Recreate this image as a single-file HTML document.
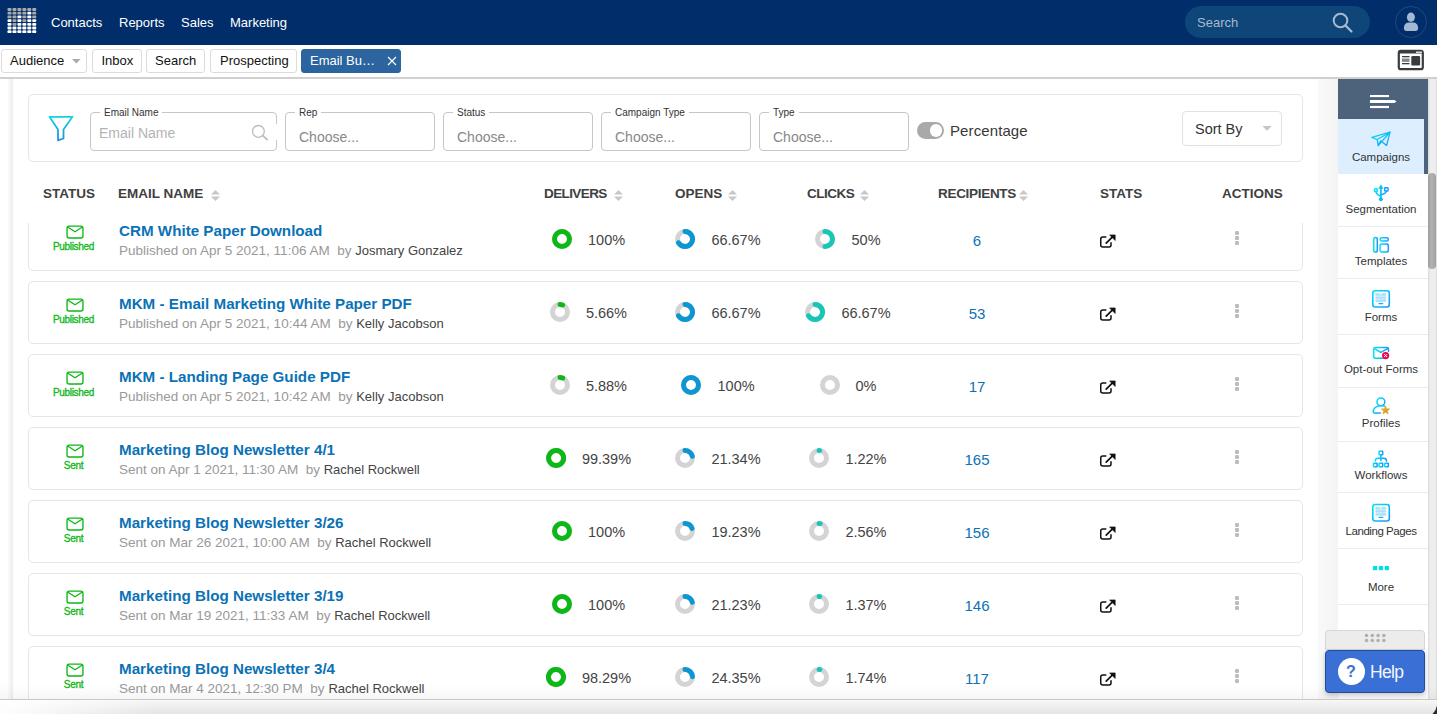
<!DOCTYPE html>
<html><head><meta charset="utf-8">
<style>
*{box-sizing:border-box;margin:0;padding:0}
html,body{width:1437px;height:714px;overflow:hidden;background:#fff;font-family:"Liberation Sans",sans-serif;position:relative}
.abs{position:absolute}
#hdr{left:0;top:0;width:1437px;height:45px;background:#012d6a}
.nav{top:15px;color:#fff;font-size:13px;line-height:15px}
#srch{left:1185px;top:6px;width:185px;height:32px;border-radius:16px;background:#0f4679}
.tab{top:49px;height:24px;border:1px solid #dcdcdc;border-radius:3px;font-size:13px;line-height:22px;color:#111;background:#fff}
#rule{left:0;top:77px;width:1437px;height:2px;background:#d0d0d0}
.lstrip{left:7px;top:79px;width:6px;height:620px;background:linear-gradient(to right,#fff,#ececec)}
.rshadow{left:1318px;top:79px;width:20px;height:620px;background:linear-gradient(to right,#f9f9f9,#f4f4f4)}
#filter{left:28px;top:94px;width:1275px;height:68px;border:1px solid #e6e6e6;border-radius:5px;background:#fff}
.fld{top:112px;height:39px;border:1px solid #c6c6c6;border-radius:4px;background:#fff}
.flab{top:107px;font-size:10px;line-height:12px;color:#333;background:#fff;padding:0 4px}
.ph{font-size:14px;line-height:16px;color:#888}
.th{top:186px;font-size:13.5px;line-height:16px;font-weight:bold;color:#404040}
.sort{width:9px;height:11px}
.card{left:28px;width:1275px;height:63px;border:1px solid #e6e6e6;border-radius:5px;background:#fff}
.stxt{left:40px;width:67px;text-align:center;font-size:10px;line-height:12px;color:#0bb815;letter-spacing:-0.3px;-webkit-text-stroke:0.3px #0bb815}
.ttl{left:119px;font-size:15.2px;line-height:18px;font-weight:bold;color:#0b72b5;white-space:nowrap}
.sub{left:119px;font-size:13.5px;line-height:16px;color:#999;white-space:nowrap}
.by{color:#444;font-size:13px}
.pct{font-size:14.5px;line-height:18px;color:#444;white-space:nowrap}
.rec{left:937px;width:80px;text-align:center;font-size:15px;line-height:18px;color:#0b72b5}
.dots{left:1235px;width:5px;height:16px}
.dots i{display:block;width:4.4px;height:4.2px;border-radius:1.2px;background:#bcbcbc;margin:0 0 0.8px 0}
#hdrcover{left:28px;top:162px;width:1276px;height:61px;background:#fff}
#side{left:1338px;top:79px;width:90px;height:620px;background:#fff}
#sidehdr{left:1338px;top:79px;width:90px;height:40px;background:#4d637b}
#camp{left:1338px;top:119px;width:86px;height:55px;background:#ddefff}
#campstrip{left:1424px;top:119px;width:4px;height:55px;background:#4d637b}
.sep{left:1338px;width:90px;height:1px;background:#ececec}
.sitem{left:1338px;width:86px;text-align:center;font-size:11.5px;line-height:14px;color:#333}
#track{left:1428px;top:79px;width:9px;height:620px;background:linear-gradient(to right,#d9d9d9,#ededed 22%,#efefef 75%,#dddddd)}
#thumb{left:1428px;top:173px;width:8px;height:96px;border-radius:4px;background:linear-gradient(to right,#9c9c9c,#b2b2b2 40%,#a8a8a8 80%,#9a9a9a)}
#bottom{left:0;top:699px;width:1437px;height:15px;background:linear-gradient(#f7f7f7,#e4e4e4);border-top:1px solid #c8c8c8}
#helphandle{left:1325px;top:630px;width:100px;height:20px;border:1px solid #d6d6d6;border-radius:4px 4px 0 0;background:#ececec}
#help{left:1325px;top:650px;width:100px;height:43px;border:1px solid #1f4c9c;border-radius:4px;background:#3a70d6;box-shadow:0 2px 5px rgba(0,0,0,0.22)}
</style></head><body>
<div id="hdr" class="abs"></div>
<svg class="abs" style="left:0;top:0" width="45" height="45" viewBox="0 0 45 45"><rect x="7.50" y="8.10" width="4" height="2.8" rx="0.9" fill="#a9a9a9"/><rect x="12.45" y="8.10" width="4" height="2.8" rx="0.9" fill="#a9a9a9"/><rect x="17.40" y="8.10" width="4" height="2.8" rx="0.9" fill="#a9a9a9"/><rect x="22.35" y="8.10" width="4" height="2.8" rx="0.9" fill="#a9a9a9"/><rect x="27.30" y="8.10" width="4" height="2.8" rx="0.9" fill="#a9a9a9"/><rect x="32.25" y="8.10" width="4" height="2.8" rx="0.9" fill="#a9a9a9"/><rect x="7.50" y="11.80" width="4" height="2.8" rx="0.9" fill="#a9a9a9"/><rect x="12.45" y="11.80" width="4" height="2.8" rx="0.9" fill="#a9a9a9"/><rect x="17.40" y="11.80" width="4" height="2.8" rx="0.9" fill="#a9a9a9"/><rect x="22.35" y="11.80" width="4" height="2.8" rx="0.9" fill="#a9a9a9"/><rect x="27.30" y="11.80" width="4" height="2.8" rx="0.9" fill="#ffffff"/><rect x="32.25" y="11.80" width="4" height="2.8" rx="0.9" fill="#a9a9a9"/><rect x="7.50" y="15.50" width="4" height="2.8" rx="0.9" fill="#a9a9a9"/><rect x="12.45" y="15.50" width="4" height="2.8" rx="0.9" fill="#a9a9a9"/><rect x="17.40" y="15.50" width="4" height="2.8" rx="0.9" fill="#ffffff"/><rect x="22.35" y="15.50" width="4" height="2.8" rx="0.9" fill="#a9a9a9"/><rect x="27.30" y="15.50" width="4" height="2.8" rx="0.9" fill="#ffffff"/><rect x="32.25" y="15.50" width="4" height="2.8" rx="0.9" fill="#a9a9a9"/><rect x="7.50" y="19.20" width="4" height="2.8" rx="0.9" fill="#ffffff"/><rect x="12.45" y="19.20" width="4" height="2.8" rx="0.9" fill="#a9a9a9"/><rect x="17.40" y="19.20" width="4" height="2.8" rx="0.9" fill="#ffffff"/><rect x="22.35" y="19.20" width="4" height="2.8" rx="0.9" fill="#a9a9a9"/><rect x="27.30" y="19.20" width="4" height="2.8" rx="0.9" fill="#ffffff"/><rect x="32.25" y="19.20" width="4" height="2.8" rx="0.9" fill="#ffffff"/><rect x="7.50" y="22.90" width="4" height="2.8" rx="0.9" fill="#ffffff"/><rect x="12.45" y="22.90" width="4" height="2.8" rx="0.9" fill="#a9a9a9"/><rect x="17.40" y="22.90" width="4" height="2.8" rx="0.9" fill="#ffffff"/><rect x="22.35" y="22.90" width="4" height="2.8" rx="0.9" fill="#ffffff"/><rect x="27.30" y="22.90" width="4" height="2.8" rx="0.9" fill="#ffffff"/><rect x="32.25" y="22.90" width="4" height="2.8" rx="0.9" fill="#ffffff"/><rect x="7.50" y="26.60" width="4" height="2.8" rx="0.9" fill="#ffffff"/><rect x="12.45" y="26.60" width="4" height="2.8" rx="0.9" fill="#ffffff"/><rect x="17.40" y="26.60" width="4" height="2.8" rx="0.9" fill="#ffffff"/><rect x="22.35" y="26.60" width="4" height="2.8" rx="0.9" fill="#ffffff"/><rect x="27.30" y="26.60" width="4" height="2.8" rx="0.9" fill="#ffffff"/><rect x="32.25" y="26.60" width="4" height="2.8" rx="0.9" fill="#ffffff"/><rect x="7.50" y="30.30" width="4" height="2.8" rx="0.9" fill="#ffffff"/><rect x="12.45" y="30.30" width="4" height="2.8" rx="0.9" fill="#ffffff"/><rect x="17.40" y="30.30" width="4" height="2.8" rx="0.9" fill="#ffffff"/><rect x="22.35" y="30.30" width="4" height="2.8" rx="0.9" fill="#ffffff"/><rect x="27.30" y="30.30" width="4" height="2.8" rx="0.9" fill="#ffffff"/><rect x="32.25" y="30.30" width="4" height="2.8" rx="0.9" fill="#ffffff"/></svg>
<div class="abs nav" style="left:51px">Contacts</div>
<div class="abs nav" style="left:119px">Reports</div>
<div class="abs nav" style="left:181px">Sales</div>
<div class="abs nav" style="left:230px">Marketing</div>
<div id="srch" class="abs"></div>
<div class="abs" style="left:1197px;top:15px;font-size:13px;line-height:15px;color:#a9b9cc">Search</div>
<svg class="abs" style="left:1330px;top:11px" width="24" height="24" viewBox="0 0 24 24"><circle cx="10.5" cy="9.5" r="6.8" fill="none" stroke="#a9b9cc" stroke-width="2"/><path d="M15.5 14.5 L21.5 20.5" stroke="#a9b9cc" stroke-width="2.2" stroke-linecap="round"/></svg>
<svg class="abs" style="left:1394px;top:5px" width="34" height="34" viewBox="0 0 34 34"><circle cx="17" cy="17" r="15.5" fill="none" stroke="#24497a" stroke-width="1"/><ellipse cx="16.9" cy="12.2" rx="4" ry="4.6" fill="#a3b8d3"/><path d="M9.9 23.5 Q9.9 17.6 14.5 17.4 L19.5 17.4 Q24.1 17.6 24.1 23.5 Q24.1 25.9 22 25.9 L12 25.9 Q9.9 25.9 9.9 23.5Z" fill="#a3b8d3"/></svg>

<div class="abs tab" style="left:1px;width:86px;padding-left:8px">Audience</div>
<svg class="abs" style="left:72px;top:59px" width="10" height="6"><path d="M0 0 H8.6 L4.3 4.4Z" fill="#aaa"/></svg>
<div class="abs tab" style="left:92px;width:50px;padding-left:8.5px">Inbox</div>
<div class="abs tab" style="left:146px;width:59px;padding-left:8px">Search</div>
<div class="abs tab" style="left:210px;width:87px;padding-left:9px">Prospecting</div>
<div class="abs tab" style="left:301px;width:100px;padding-left:8px;background:#2b649e;border-color:#2b649e;color:#fff">Email Bu…</div>
<svg class="abs" style="left:386px;top:55px" width="12" height="12"><path d="M2 2 L10 10 M10 2 L2 10" stroke="#fff" stroke-width="1.2"/></svg>
<svg class="abs" style="left:1397px;top:49px" width="28" height="22" viewBox="0 0 28 22"><rect x="1.8" y="1.8" width="24" height="18.4" rx="2" fill="#fff" stroke="#3a3d40" stroke-width="2.2"/><rect x="2" y="2" width="24" height="2.5" fill="#3a3d40"/><rect x="19" y="2.6" width="6" height="1.2" fill="#fff"/><rect x="5" y="7" width="7.5" height="1.3" fill="#3a3d40"/><rect x="5" y="9.5" width="7.5" height="3.4" fill="#888"/><rect x="5" y="14" width="7.5" height="1.3" fill="#3a3d40"/><rect x="14.3" y="7" width="8.8" height="9.5" rx="1.2" fill="#3a3d40"/></svg>
<div id="rule" class="abs"></div>

<div class="abs lstrip"></div>
<div class="abs rshadow"></div>

<div class="abs card" style="top:208px"></div>
<svg class="abs" style="left:65.9px;top:225.3px" width="18" height="14" viewBox="0 0 18 14"><rect x="1.05" y="1.05" width="15.9" height="11.9" rx="2" fill="none" stroke="#0bb815" stroke-width="1.35"/><path d="M1.6 2 L9 6.8 L16.4 2" fill="none" stroke="#0bb815" stroke-width="1.35" stroke-linejoin="round"/></svg>
<div class="abs stxt" style="top:241px">Published</div>
<div class="abs ttl" style="top:222px">CRM White Paper Download</div>
<div class="abs sub" style="top:243px">Published on Apr 5 2021, 11:06 AM&nbsp; by <span class="by">Josmary Gonzalez</span></div>
<svg class="abs" style="left:551.9617499999999px;top:229px" width="20" height="20" viewBox="0 0 20 20"><circle cx="10" cy="10" r="7.5" fill="none" stroke="#d4d4d4" stroke-width="5"/><circle cx="10" cy="10" r="7.5" fill="none" stroke="#0bb815" stroke-width="5"/></svg><div class="abs pct" style="left:588.0px;top:231px">100%</div>
<svg class="abs" style="left:675.41525px;top:229px" width="20" height="20" viewBox="0 0 20 20"><circle cx="10" cy="10" r="7.5" fill="none" stroke="#d4d4d4" stroke-width="5"/><path d="M10 2.5 A7.5 7.5 0 1 1 3.50 13.75" fill="none" stroke="#0c97d2" stroke-width="5" stroke-linecap="round"/></svg><div class="abs pct" style="left:711.4px;top:231px">66.67%</div>
<svg class="abs" style="left:815.49275px;top:229px" width="20" height="20" viewBox="0 0 20 20"><circle cx="10" cy="10" r="7.5" fill="none" stroke="#d4d4d4" stroke-width="5"/><path d="M10 2.5 A7.5 7.5 0 0 1 10.00 17.50" fill="none" stroke="#17c6b6" stroke-width="5" stroke-linecap="round"/></svg><div class="abs pct" style="left:851.5px;top:231px">50%</div>
<div class="abs rec" style="top:232px">6</div>
<svg class="abs" style="left:1099px;top:233px" width="18" height="18" viewBox="0 0 18 18"><path d="M6.8 3.9 H3.8 Q1.75 3.9 1.75 5.9 V12.1 Q1.75 14.1 3.8 14.1 H10 Q12 14.1 12 12.1 V9.8" fill="none" stroke="#111" stroke-width="1.5" stroke-linecap="round"/><path d="M7.2 10.2 L13.5 3.9" stroke="#111" stroke-width="1.7" stroke-linecap="round"/><path d="M10.6 1.9 H16.2 V7.5 Z" fill="#111" stroke="#111" stroke-width="0.6" stroke-linejoin="round"/></svg>
<div class="abs dots" style="top:231px"><i></i><i></i><i></i></div>
<div class="abs card" style="top:281px"></div>
<svg class="abs" style="left:65.9px;top:298.3px" width="18" height="14" viewBox="0 0 18 14"><rect x="1.05" y="1.05" width="15.9" height="11.9" rx="2" fill="none" stroke="#0bb815" stroke-width="1.35"/><path d="M1.6 2 L9 6.8 L16.4 2" fill="none" stroke="#0bb815" stroke-width="1.35" stroke-linejoin="round"/></svg>
<div class="abs stxt" style="top:314px">Published</div>
<div class="abs ttl" style="top:295px">MKM - Email Marketing White Paper PDF</div>
<div class="abs sub" style="top:316px">Published on Apr 5 2021, 10:44 AM&nbsp; by <span class="by">Kelly Jacobson</span></div>
<svg class="abs" style="left:549.94625px;top:302px" width="20" height="20" viewBox="0 0 20 20"><circle cx="10" cy="10" r="7.5" fill="none" stroke="#d4d4d4" stroke-width="5"/><path d="M10 2.5 A7.5 7.5 0 0 1 12.61 2.97" fill="none" stroke="#0bb815" stroke-width="5" stroke-linecap="round"/></svg><div class="abs pct" style="left:585.9px;top:304px">5.66%</div>
<svg class="abs" style="left:675.41525px;top:302px" width="20" height="20" viewBox="0 0 20 20"><circle cx="10" cy="10" r="7.5" fill="none" stroke="#d4d4d4" stroke-width="5"/><path d="M10 2.5 A7.5 7.5 0 1 1 3.50 13.75" fill="none" stroke="#0c97d2" stroke-width="5" stroke-linecap="round"/></svg><div class="abs pct" style="left:711.4px;top:304px">66.67%</div>
<svg class="abs" style="left:805.41525px;top:302px" width="20" height="20" viewBox="0 0 20 20"><circle cx="10" cy="10" r="7.5" fill="none" stroke="#d4d4d4" stroke-width="5"/><path d="M10 2.5 A7.5 7.5 0 1 1 3.50 13.75" fill="none" stroke="#17c6b6" stroke-width="5" stroke-linecap="round"/></svg><div class="abs pct" style="left:841.4px;top:304px">66.67%</div>
<div class="abs rec" style="top:305px">53</div>
<svg class="abs" style="left:1099px;top:306px" width="18" height="18" viewBox="0 0 18 18"><path d="M6.8 3.9 H3.8 Q1.75 3.9 1.75 5.9 V12.1 Q1.75 14.1 3.8 14.1 H10 Q12 14.1 12 12.1 V9.8" fill="none" stroke="#111" stroke-width="1.5" stroke-linecap="round"/><path d="M7.2 10.2 L13.5 3.9" stroke="#111" stroke-width="1.7" stroke-linecap="round"/><path d="M10.6 1.9 H16.2 V7.5 Z" fill="#111" stroke="#111" stroke-width="0.6" stroke-linejoin="round"/></svg>
<div class="abs dots" style="top:304px"><i></i><i></i><i></i></div>
<div class="abs card" style="top:354px"></div>
<svg class="abs" style="left:65.9px;top:371.3px" width="18" height="14" viewBox="0 0 18 14"><rect x="1.05" y="1.05" width="15.9" height="11.9" rx="2" fill="none" stroke="#0bb815" stroke-width="1.35"/><path d="M1.6 2 L9 6.8 L16.4 2" fill="none" stroke="#0bb815" stroke-width="1.35" stroke-linejoin="round"/></svg>
<div class="abs stxt" style="top:387px">Published</div>
<div class="abs ttl" style="top:368px">MKM - Landing Page Guide PDF</div>
<div class="abs sub" style="top:389px">Published on Apr 5 2021, 10:42 AM&nbsp; by <span class="by">Kelly Jacobson</span></div>
<svg class="abs" style="left:549.94625px;top:375px" width="20" height="20" viewBox="0 0 20 20"><circle cx="10" cy="10" r="7.5" fill="none" stroke="#d4d4d4" stroke-width="5"/><path d="M10 2.5 A7.5 7.5 0 0 1 12.71 3.01" fill="none" stroke="#0bb815" stroke-width="5" stroke-linecap="round"/></svg><div class="abs pct" style="left:585.9px;top:377px">5.88%</div>
<svg class="abs" style="left:681.4617499999999px;top:375px" width="20" height="20" viewBox="0 0 20 20"><circle cx="10" cy="10" r="7.5" fill="none" stroke="#d4d4d4" stroke-width="5"/><circle cx="10" cy="10" r="7.5" fill="none" stroke="#0c97d2" stroke-width="5"/></svg><div class="abs pct" style="left:717.5px;top:377px">100%</div>
<svg class="abs" style="left:819.52375px;top:375px" width="20" height="20" viewBox="0 0 20 20"><circle cx="10" cy="10" r="7.5" fill="none" stroke="#d4d4d4" stroke-width="5"/></svg><div class="abs pct" style="left:855.5px;top:377px">0%</div>
<div class="abs rec" style="top:378px">17</div>
<svg class="abs" style="left:1099px;top:379px" width="18" height="18" viewBox="0 0 18 18"><path d="M6.8 3.9 H3.8 Q1.75 3.9 1.75 5.9 V12.1 Q1.75 14.1 3.8 14.1 H10 Q12 14.1 12 12.1 V9.8" fill="none" stroke="#111" stroke-width="1.5" stroke-linecap="round"/><path d="M7.2 10.2 L13.5 3.9" stroke="#111" stroke-width="1.7" stroke-linecap="round"/><path d="M10.6 1.9 H16.2 V7.5 Z" fill="#111" stroke="#111" stroke-width="0.6" stroke-linejoin="round"/></svg>
<div class="abs dots" style="top:377px"><i></i><i></i><i></i></div>
<div class="abs card" style="top:427px"></div>
<svg class="abs" style="left:65.9px;top:444.3px" width="18" height="14" viewBox="0 0 18 14"><rect x="1.05" y="1.05" width="15.9" height="11.9" rx="2" fill="none" stroke="#0bb815" stroke-width="1.35"/><path d="M1.6 2 L9 6.8 L16.4 2" fill="none" stroke="#0bb815" stroke-width="1.35" stroke-linejoin="round"/></svg>
<div class="abs stxt" style="top:460px">Sent</div>
<div class="abs ttl" style="top:441px">Marketing Blog Newsletter 4/1</div>
<div class="abs sub" style="top:462px">Sent on Apr 1 2021, 11:30 AM&nbsp; by <span class="by">Rachel Rockwell</span></div>
<svg class="abs" style="left:545.91525px;top:448px" width="20" height="20" viewBox="0 0 20 20"><circle cx="10" cy="10" r="7.5" fill="none" stroke="#d4d4d4" stroke-width="5"/><path d="M10 2.5 A7.5 7.5 0 1 1 9.71 2.51" fill="none" stroke="#0bb815" stroke-width="5" stroke-linecap="round"/></svg><div class="abs pct" style="left:581.9px;top:450px">99.39%</div>
<svg class="abs" style="left:675.41525px;top:448px" width="20" height="20" viewBox="0 0 20 20"><circle cx="10" cy="10" r="7.5" fill="none" stroke="#d4d4d4" stroke-width="5"/><path d="M10 2.5 A7.5 7.5 0 0 1 17.30 8.29" fill="none" stroke="#0c97d2" stroke-width="5" stroke-linecap="round"/></svg><div class="abs pct" style="left:711.4px;top:450px">21.34%</div>
<svg class="abs" style="left:809.44625px;top:448px" width="20" height="20" viewBox="0 0 20 20"><circle cx="10" cy="10" r="7.5" fill="none" stroke="#d4d4d4" stroke-width="5"/><path d="M10 2.5 A7.5 7.5 0 0 1 10.57 2.52" fill="none" stroke="#17c6b6" stroke-width="5" stroke-linecap="round"/></svg><div class="abs pct" style="left:845.4px;top:450px">1.22%</div>
<div class="abs rec" style="top:451px">165</div>
<svg class="abs" style="left:1099px;top:452px" width="18" height="18" viewBox="0 0 18 18"><path d="M6.8 3.9 H3.8 Q1.75 3.9 1.75 5.9 V12.1 Q1.75 14.1 3.8 14.1 H10 Q12 14.1 12 12.1 V9.8" fill="none" stroke="#111" stroke-width="1.5" stroke-linecap="round"/><path d="M7.2 10.2 L13.5 3.9" stroke="#111" stroke-width="1.7" stroke-linecap="round"/><path d="M10.6 1.9 H16.2 V7.5 Z" fill="#111" stroke="#111" stroke-width="0.6" stroke-linejoin="round"/></svg>
<div class="abs dots" style="top:450px"><i></i><i></i><i></i></div>
<div class="abs card" style="top:500px"></div>
<svg class="abs" style="left:65.9px;top:517.3px" width="18" height="14" viewBox="0 0 18 14"><rect x="1.05" y="1.05" width="15.9" height="11.9" rx="2" fill="none" stroke="#0bb815" stroke-width="1.35"/><path d="M1.6 2 L9 6.8 L16.4 2" fill="none" stroke="#0bb815" stroke-width="1.35" stroke-linejoin="round"/></svg>
<div class="abs stxt" style="top:533px">Sent</div>
<div class="abs ttl" style="top:514px">Marketing Blog Newsletter 3/26</div>
<div class="abs sub" style="top:535px">Sent on Mar 26 2021, 10:00 AM&nbsp; by <span class="by">Rachel Rockwell</span></div>
<svg class="abs" style="left:551.9617499999999px;top:521px" width="20" height="20" viewBox="0 0 20 20"><circle cx="10" cy="10" r="7.5" fill="none" stroke="#d4d4d4" stroke-width="5"/><circle cx="10" cy="10" r="7.5" fill="none" stroke="#0bb815" stroke-width="5"/></svg><div class="abs pct" style="left:588.0px;top:523px">100%</div>
<svg class="abs" style="left:675.41525px;top:521px" width="20" height="20" viewBox="0 0 20 20"><circle cx="10" cy="10" r="7.5" fill="none" stroke="#d4d4d4" stroke-width="5"/><path d="M10 2.5 A7.5 7.5 0 0 1 17.01 7.34" fill="none" stroke="#0c97d2" stroke-width="5" stroke-linecap="round"/></svg><div class="abs pct" style="left:711.4px;top:523px">19.23%</div>
<svg class="abs" style="left:809.44625px;top:521px" width="20" height="20" viewBox="0 0 20 20"><circle cx="10" cy="10" r="7.5" fill="none" stroke="#d4d4d4" stroke-width="5"/><path d="M10 2.5 A7.5 7.5 0 0 1 11.20 2.60" fill="none" stroke="#17c6b6" stroke-width="5" stroke-linecap="round"/></svg><div class="abs pct" style="left:845.4px;top:523px">2.56%</div>
<div class="abs rec" style="top:524px">156</div>
<svg class="abs" style="left:1099px;top:525px" width="18" height="18" viewBox="0 0 18 18"><path d="M6.8 3.9 H3.8 Q1.75 3.9 1.75 5.9 V12.1 Q1.75 14.1 3.8 14.1 H10 Q12 14.1 12 12.1 V9.8" fill="none" stroke="#111" stroke-width="1.5" stroke-linecap="round"/><path d="M7.2 10.2 L13.5 3.9" stroke="#111" stroke-width="1.7" stroke-linecap="round"/><path d="M10.6 1.9 H16.2 V7.5 Z" fill="#111" stroke="#111" stroke-width="0.6" stroke-linejoin="round"/></svg>
<div class="abs dots" style="top:523px"><i></i><i></i><i></i></div>
<div class="abs card" style="top:573px"></div>
<svg class="abs" style="left:65.9px;top:590.3px" width="18" height="14" viewBox="0 0 18 14"><rect x="1.05" y="1.05" width="15.9" height="11.9" rx="2" fill="none" stroke="#0bb815" stroke-width="1.35"/><path d="M1.6 2 L9 6.8 L16.4 2" fill="none" stroke="#0bb815" stroke-width="1.35" stroke-linejoin="round"/></svg>
<div class="abs stxt" style="top:606px">Sent</div>
<div class="abs ttl" style="top:587px">Marketing Blog Newsletter 3/19</div>
<div class="abs sub" style="top:608px">Sent on Mar 19 2021, 11:33 AM&nbsp; by <span class="by">Rachel Rockwell</span></div>
<svg class="abs" style="left:551.9617499999999px;top:594px" width="20" height="20" viewBox="0 0 20 20"><circle cx="10" cy="10" r="7.5" fill="none" stroke="#d4d4d4" stroke-width="5"/><circle cx="10" cy="10" r="7.5" fill="none" stroke="#0bb815" stroke-width="5"/></svg><div class="abs pct" style="left:588.0px;top:596px">100%</div>
<svg class="abs" style="left:675.41525px;top:594px" width="20" height="20" viewBox="0 0 20 20"><circle cx="10" cy="10" r="7.5" fill="none" stroke="#d4d4d4" stroke-width="5"/><path d="M10 2.5 A7.5 7.5 0 0 1 17.29 8.24" fill="none" stroke="#0c97d2" stroke-width="5" stroke-linecap="round"/></svg><div class="abs pct" style="left:711.4px;top:596px">21.23%</div>
<svg class="abs" style="left:809.44625px;top:594px" width="20" height="20" viewBox="0 0 20 20"><circle cx="10" cy="10" r="7.5" fill="none" stroke="#d4d4d4" stroke-width="5"/><path d="M10 2.5 A7.5 7.5 0 0 1 10.64 2.53" fill="none" stroke="#17c6b6" stroke-width="5" stroke-linecap="round"/></svg><div class="abs pct" style="left:845.4px;top:596px">1.37%</div>
<div class="abs rec" style="top:597px">146</div>
<svg class="abs" style="left:1099px;top:598px" width="18" height="18" viewBox="0 0 18 18"><path d="M6.8 3.9 H3.8 Q1.75 3.9 1.75 5.9 V12.1 Q1.75 14.1 3.8 14.1 H10 Q12 14.1 12 12.1 V9.8" fill="none" stroke="#111" stroke-width="1.5" stroke-linecap="round"/><path d="M7.2 10.2 L13.5 3.9" stroke="#111" stroke-width="1.7" stroke-linecap="round"/><path d="M10.6 1.9 H16.2 V7.5 Z" fill="#111" stroke="#111" stroke-width="0.6" stroke-linejoin="round"/></svg>
<div class="abs dots" style="top:596px"><i></i><i></i><i></i></div>
<div class="abs card" style="top:646px"></div>
<svg class="abs" style="left:65.9px;top:663.3px" width="18" height="14" viewBox="0 0 18 14"><rect x="1.05" y="1.05" width="15.9" height="11.9" rx="2" fill="none" stroke="#0bb815" stroke-width="1.35"/><path d="M1.6 2 L9 6.8 L16.4 2" fill="none" stroke="#0bb815" stroke-width="1.35" stroke-linejoin="round"/></svg>
<div class="abs stxt" style="top:679px">Sent</div>
<div class="abs ttl" style="top:660px">Marketing Blog Newsletter 3/4</div>
<div class="abs sub" style="top:681px">Sent on Mar 4 2021, 12:30 PM&nbsp; by <span class="by">Rachel Rockwell</span></div>
<svg class="abs" style="left:545.91525px;top:667px" width="20" height="20" viewBox="0 0 20 20"><circle cx="10" cy="10" r="7.5" fill="none" stroke="#d4d4d4" stroke-width="5"/><path d="M10 2.5 A7.5 7.5 0 1 1 9.20 2.54" fill="none" stroke="#0bb815" stroke-width="5" stroke-linecap="round"/></svg><div class="abs pct" style="left:581.9px;top:669px">98.29%</div>
<svg class="abs" style="left:675.41525px;top:667px" width="20" height="20" viewBox="0 0 20 20"><circle cx="10" cy="10" r="7.5" fill="none" stroke="#d4d4d4" stroke-width="5"/><path d="M10 2.5 A7.5 7.5 0 0 1 17.49 9.69" fill="none" stroke="#0c97d2" stroke-width="5" stroke-linecap="round"/></svg><div class="abs pct" style="left:711.4px;top:669px">24.35%</div>
<svg class="abs" style="left:809.44625px;top:667px" width="20" height="20" viewBox="0 0 20 20"><circle cx="10" cy="10" r="7.5" fill="none" stroke="#d4d4d4" stroke-width="5"/><path d="M10 2.5 A7.5 7.5 0 0 1 10.82 2.54" fill="none" stroke="#17c6b6" stroke-width="5" stroke-linecap="round"/></svg><div class="abs pct" style="left:845.4px;top:669px">1.74%</div>
<div class="abs rec" style="top:670px">117</div>
<svg class="abs" style="left:1099px;top:671px" width="18" height="18" viewBox="0 0 18 18"><path d="M6.8 3.9 H3.8 Q1.75 3.9 1.75 5.9 V12.1 Q1.75 14.1 3.8 14.1 H10 Q12 14.1 12 12.1 V9.8" fill="none" stroke="#111" stroke-width="1.5" stroke-linecap="round"/><path d="M7.2 10.2 L13.5 3.9" stroke="#111" stroke-width="1.7" stroke-linecap="round"/><path d="M10.6 1.9 H16.2 V7.5 Z" fill="#111" stroke="#111" stroke-width="0.6" stroke-linejoin="round"/></svg>
<div class="abs dots" style="top:669px"><i></i><i></i><i></i></div>

<div id="hdrcover" class="abs"></div>
<div class="abs th" style="left:43px">STATUS</div>
<div class="abs th" style="left:118px">EMAIL NAME</div>
<div class="abs th" style="left:544px;letter-spacing:-0.6px">DELIVERS</div>
<div class="abs th" style="left:675px">OPENS</div>
<div class="abs th" style="left:807px;letter-spacing:-0.5px">CLICKS</div>
<div class="abs th" style="left:938px;letter-spacing:-0.3px">RECIPIENTS</div>
<div class="abs th" style="left:1100px">STATS</div>
<div class="abs th" style="left:1222px">ACTIONS</div>
<svg class="abs sort" style="left:211px;top:189.5px" viewBox="0 0 9 11"><path d="M0 4.5 L4.5 0 L9 4.5Z M0 6.5 L4.5 11 L9 6.5Z" fill="#c8c8c8"/></svg>
<svg class="abs sort" style="left:614px;top:189.5px" viewBox="0 0 9 11"><path d="M0 4.5 L4.5 0 L9 4.5Z M0 6.5 L4.5 11 L9 6.5Z" fill="#c8c8c8"/></svg>
<svg class="abs sort" style="left:728px;top:189.5px" viewBox="0 0 9 11"><path d="M0 4.5 L4.5 0 L9 4.5Z M0 6.5 L4.5 11 L9 6.5Z" fill="#c8c8c8"/></svg>
<svg class="abs sort" style="left:860px;top:189.5px" viewBox="0 0 9 11"><path d="M0 4.5 L4.5 0 L9 4.5Z M0 6.5 L4.5 11 L9 6.5Z" fill="#c8c8c8"/></svg>
<svg class="abs sort" style="left:1019px;top:189.5px" viewBox="0 0 9 11"><path d="M0 4.5 L4.5 0 L9 4.5Z M0 6.5 L4.5 11 L9 6.5Z" fill="#c8c8c8"/></svg>

<div id="filter" class="abs"></div>
<svg class="abs" style="left:47px;top:114px" width="28" height="30" viewBox="0 0 28 30"><defs><linearGradient id="fg" x1="0" y1="0" x2="0" y2="1"><stop offset="0" stop-color="#12d3e0"/><stop offset="1" stop-color="#1e8fe8"/></linearGradient></defs><path d="M2.5 2.8 H25.5 L16.5 15.5 V24.5 L11 26.3 V15.5 Z" fill="none" stroke="url(#fg)" stroke-width="1.8" stroke-linejoin="round"/></svg>

<div class="abs fld" style="left:90px;width:187px"></div>
<div class="abs flab" style="left:100px">Email Name</div>
<div class="abs ph" style="left:99px;top:125px;color:#b3b3b3">Email Name</div>
<div class="abs" style="left:275px;top:124px;width:3px;height:16px;background:#fff"></div><svg class="abs" style="left:251px;top:124px" width="18" height="18" viewBox="0 0 18 18"><circle cx="7.4" cy="7.4" r="5.9" fill="none" stroke="#bcbcbc" stroke-width="1.3"/><path d="M11.8 11.6 L16.2 15.6" stroke="#bcbcbc" stroke-width="1.9" stroke-linecap="round"/></svg>
<div class="abs fld" style="left:285px;width:150px"></div>
<div class="abs flab" style="left:295px">Rep</div>
<div class="abs ph" style="left:299px;top:129px">Choose...</div>
<div class="abs fld" style="left:443px;width:150px"></div>
<div class="abs flab" style="left:453px">Status</div>
<div class="abs ph" style="left:457px;top:129px">Choose...</div>
<div class="abs fld" style="left:601px;width:150px"></div>
<div class="abs flab" style="left:611px">Campaign Type</div>
<div class="abs ph" style="left:615px;top:129px">Choose...</div>
<div class="abs fld" style="left:759px;width:150px"></div>
<div class="abs flab" style="left:769px">Type</div>
<div class="abs ph" style="left:773px;top:129px">Choose...</div>
<div class="abs" style="left:917px;top:122px;width:27px;height:17px;border-radius:8.5px;background:#a9a9a9"></div>
<div class="abs" style="left:929.5px;top:124px;width:12.5px;height:13px;border-radius:6.5px;background:#fff"></div>
<div class="abs" style="left:950px;top:122px;font-size:15px;line-height:18px;color:#383838;letter-spacing:0.1px">Percentage</div>
<div class="abs" style="left:1182px;top:111px;width:100px;height:35px;border:1px solid #dde3ea;border-radius:4px;background:#fff"></div>
<div class="abs" style="left:1195px;top:120px;font-size:14.5px;line-height:18px;color:#333">Sort By</div>
<svg class="abs" style="left:1262px;top:126px" width="11" height="6"><path d="M0.3 0 H9.7 L5 4.8Z" fill="#c2c7cf"/></svg>

<div id="side" class="abs"></div>
<div id="sidehdr" class="abs"></div>
<svg class="abs" style="left:1368px;top:93px" width="32" height="16" viewBox="0 0 32 16"><rect x="2" y="2" width="19" height="2.1" fill="#fff"/><path d="M2 7.1 H26.3 L28.6 8.55 L26.3 10 H2Z" fill="#fff"/><rect x="2" y="12.9" width="19" height="2.2" fill="#fff"/></svg>
<div id="camp" class="abs"></div>
<div id="campstrip" class="abs"></div>
<div class="abs sep" style="top:226px"></div>
<div class="abs sep" style="top:278px"></div>
<div class="abs sep" style="top:334px"></div>
<div class="abs sep" style="top:387px"></div>
<div class="abs sep" style="top:441px"></div>
<div class="abs sep" style="top:492px"></div>
<div class="abs sep" style="top:548px"></div>
<div class="abs sep" style="top:604px"></div>
<div class="abs sitem" style="top:150px">Campaigns</div>
<div class="abs sitem" style="top:202px">Segmentation</div>
<div class="abs sitem" style="top:254px">Templates</div>
<div class="abs sitem" style="top:310px">Forms</div>
<div class="abs sitem" style="top:362px">Opt-out Forms</div>
<div class="abs sitem" style="top:416px">Profiles</div>
<div class="abs sitem" style="top:468px">Workflows</div>
<div class="abs sitem" style="top:524px;letter-spacing:-0.45px">Landing Pages</div>
<div class="abs sitem" style="top:580px">More</div>
<svg class="abs" style="left:1338px;top:119px" width="90" height="490" viewBox="1338 119 90 490">
<defs>
<linearGradient id="g1" gradientUnits="objectBoundingBox" x1="0" y1="0" x2="1" y2="1"><stop offset="0" stop-color="#00e4f2"/><stop offset="1" stop-color="#1a96ff"/></linearGradient>
<linearGradient id="g2" gradientUnits="objectBoundingBox" x1="0" y1="0" x2="1" y2="0"><stop offset="0" stop-color="#00e4f2"/><stop offset="1" stop-color="#1a96ff"/></linearGradient>
<linearGradient id="gs" x1="0" y1="0" x2="1" y2="1"><stop offset="0" stop-color="#f0c43a"/><stop offset="1" stop-color="#c98a10"/></linearGradient>
</defs>
<!-- campaigns plane -->
<g fill="none" stroke="url(#g1)" stroke-width="1.3" stroke-linejoin="round" stroke-linecap="round">
<path d="M1390 132.2 L1371.8 137.3 L1377.2 139.5 L1378.2 145.6 L1380.7 140.8 L1386.6 145.4 Z"/>
<path d="M1390 132.2 L1377.2 139.5 M1390 132.2 L1378.2 145.6"/>
</g>
<!-- segmentation usb -->
<path d="M1380.9 187 V198" stroke="#0bbff9" stroke-width="1.7"/>
<g fill="none" stroke-width="1.6" stroke-linecap="round">
<path d="M1376.1 191.8 Q1376.6 194.6 1380.9 196.3" stroke="#06d2f5"/>
<path d="M1386.3 191 Q1386 193.6 1380.9 194.8" stroke="#16a8fc"/>
<circle cx="1375.9" cy="190.3" r="1.5" stroke="#02e0f3"/>
</g>
<path d="M1380.9 184.8 L1383.1 188.6 L1378.7 188.6 Z" fill="#08c6f9" stroke="#08c6f9" stroke-width="0.6" stroke-linejoin="round"/>
<circle cx="1380.9" cy="199.2" r="2" fill="#0fbafa"/>
<rect x="1384.7" y="187.7" width="3.4" height="3.4" rx="0.5" fill="none" stroke="#1a9cff" stroke-width="1.4"/>
<!-- templates -->
<g fill="none" stroke="url(#g2)" stroke-width="1.5">
<rect x="1373.7" y="237.6" width="3.6" height="14.5" rx="1.8"/>
<rect x="1380.1" y="237.7" width="8.2" height="3.4" rx="1.7"/>
<rect x="1380.1" y="244.1" width="8.2" height="8" rx="1.5"/>
</g>
<!-- forms -->
<g>
<rect x="1372.8" y="290.7" width="16.5" height="16.3" rx="2.5" fill="none" stroke="url(#g1)" stroke-width="1.6"/>
<g stroke-linecap="round">
<path d="M1376.6 294.6 H1385 M1376.6 297.6 H1385 M1376.6 300.6 H1385" stroke="#ade0fb" stroke-width="2.8"/>
<path d="M1377 296.1 H1384.6 M1377 299.1 H1384.6" stroke="#dff4fe" stroke-width="0.6"/>
</g>
<path d="M1379.6 293.2 L1380.8 295.2 L1382 293.2 Z" fill="#fff"/>
<path d="M1379 303.6 H1382.8" stroke="#10b0f8" stroke-width="1.1" stroke-linecap="round"/>
</g>
<!-- opt-out -->
<g fill="none" stroke="url(#g2)" stroke-width="1.5" stroke-linecap="round">
<path d="M1383.5 358.3 H1375.5 Q1373.7 358.3 1373.7 356.5 V349.4 Q1373.7 347.5 1375.5 347.5 H1386.6 Q1388.5 347.5 1388.5 349.4 V351.5"/>
<path d="M1374.5 348.7 L1380.9 352.5 L1387.5 348.7"/>
</g>
<circle cx="1385.6" cy="355.6" r="3.6" fill="#ea0a4e"/>
<path d="M1384.2 354.2 L1387 357 M1387 354.2 L1384.2 357" stroke="#fff" stroke-width="1"/>
<!-- profiles -->
<g fill="none" stroke="url(#g1)" stroke-width="1.5" stroke-linecap="round">
<circle cx="1380.9" cy="401.8" r="3.9"/>
<path d="M1384.5 406 Q1382.5 405.7 1380.5 405.8 Q1373.5 406.5 1373.2 411.5 Q1373.2 413 1374.8 413 H1380.3"/>
</g>
<path d="M1385.50 405.80 L1386.68 408.68 L1389.78 408.91 L1387.40 410.92 L1388.15 413.94 L1385.50 412.30 L1382.85 413.94 L1383.60 410.92 L1381.22 408.91 L1384.32 408.68 Z" fill="url(#gs)" stroke="#dba21f" stroke-width="0.5" stroke-linejoin="round"/>
<!-- workflows -->
<g fill="none" stroke="url(#g2)" stroke-width="1.5">
<rect x="1379.1" y="451.2" width="3.6" height="3.6" rx="0.6"/>
<path d="M1380.9 455 V461" stroke="#10b4fb"/>
<path d="M1375.3 461 Q1375.3 458.3 1378 458.3 H1383.8 Q1386.5 458.3 1386.5 461" stroke-linecap="round"/>
<rect x="1373.5" y="463.2" width="3.6" height="3.6" rx="0.6"/>
<rect x="1379.1" y="463.2" width="3.6" height="3.6" rx="0.6"/>
<rect x="1384.7" y="463.2" width="3.6" height="3.6" rx="0.6"/>
</g>
<!-- landing pages -->
<g>
<rect x="1372.8" y="504.5" width="16.5" height="16.5" rx="2.5" fill="none" stroke="url(#g1)" stroke-width="1.6"/>
<g stroke-linecap="round">
<path d="M1376.6 508.4 H1385 M1376.6 511.4 H1385 M1376.6 514.4 H1385" stroke="#ade0fb" stroke-width="2.8"/>
<path d="M1377 509.9 H1384.6 M1377 512.9 H1384.6" stroke="#dff4fe" stroke-width="0.6"/>
</g>
<path d="M1379.6 507.0 L1380.8 509.0 L1382 507.0 Z" fill="#fff"/>
<path d="M1379 517.4 H1382.8" stroke="#10b0f8" stroke-width="1.1" stroke-linecap="round"/>
</g>
<!-- more -->
<g fill="#00dfe3">
<rect x="1372.9" y="566" width="4.3" height="4.2" rx="0.8"/>
<rect x="1378.8" y="566" width="4.3" height="4.2" rx="0.8"/>
<rect x="1384.7" y="566" width="4.3" height="4.2" rx="0.8"/>
</g>
</svg>

<div id="track" class="abs"></div>
<div id="thumb" class="abs"></div>

<div id="helphandle" class="abs"></div>
<svg class="abs" style="left:1364px;top:633px" width="22" height="10" viewBox="0 0 22 10"><g fill="#b0b0b0"><circle cx="2.5" cy="2.5" r="1.8"/><circle cx="8.3" cy="2.5" r="1.8"/><circle cx="14.1" cy="2.5" r="1.8"/><circle cx="19.9" cy="2.5" r="1.8"/><circle cx="2.5" cy="7.5" r="1.8"/><circle cx="8.3" cy="7.5" r="1.8"/><circle cx="14.1" cy="7.5" r="1.8"/><circle cx="19.9" cy="7.5" r="1.8"/></g></svg>
<div id="help" class="abs"></div>
<div class="abs" style="left:1337.5px;top:657.5px;width:27px;height:27px;border-radius:13.5px;background:#fff;color:#3a70d6;font-weight:bold;font-size:16px;line-height:28px;text-align:center">?</div>
<div class="abs" style="left:1370px;top:661px;font-size:17.5px;line-height:22px;color:#f4f7fd;letter-spacing:-0.7px">Help</div>

<div class="abs" style="left:0;top:685px;width:1437px;height:14px;background:linear-gradient(rgba(0,0,0,0),rgba(0,0,0,0.035))"></div>
<div id="bottom" class="abs"></div>
<div class="abs" style="left:0;top:700px;width:160px;height:14px;background:linear-gradient(to right,rgba(255,255,255,0.95),rgba(255,255,255,0))"></div>
<svg class="abs" style="left:1427px;top:702px" width="10" height="12" viewBox="1427 702 10 12"><path d="M1437 705.5 V714 H1432.5 Q1436.2 710.5 1437 705.5Z" fill="#2a2a2a"/></svg>
</body></html>
